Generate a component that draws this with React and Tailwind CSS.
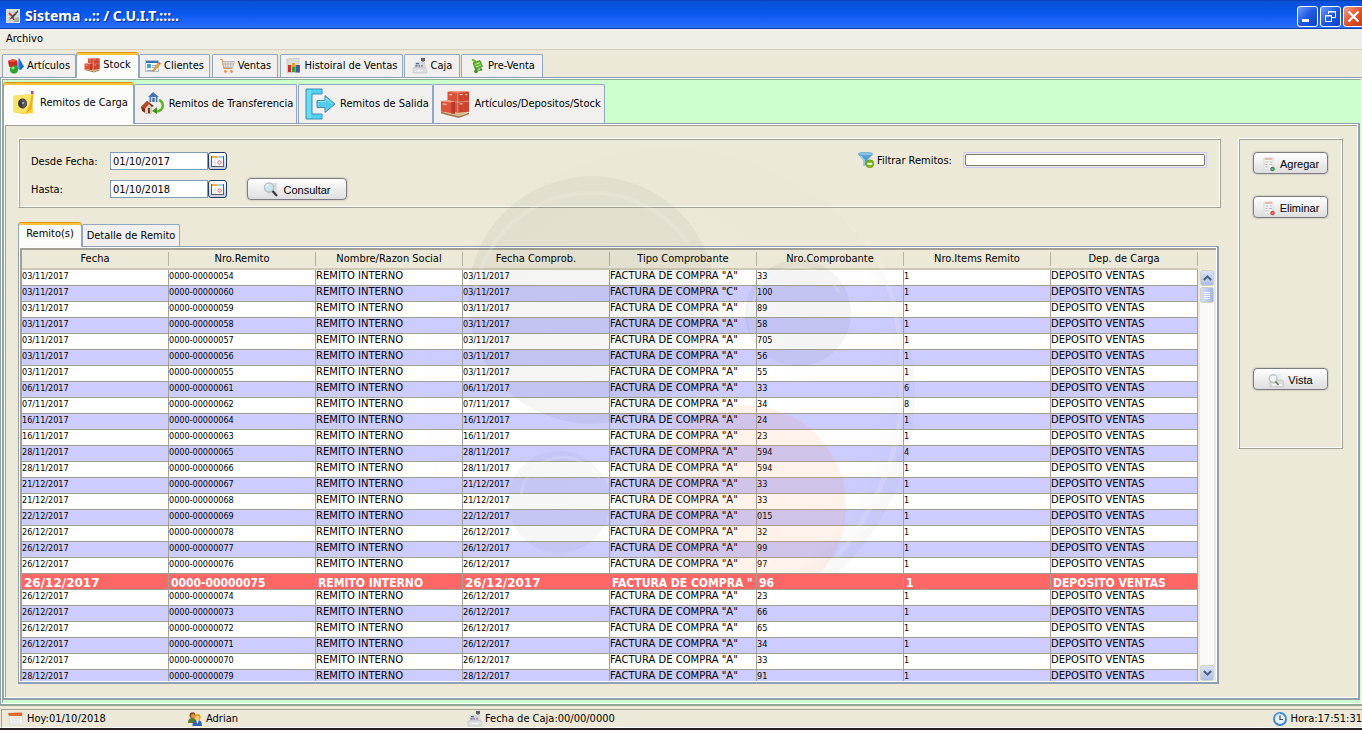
import React from "react";

const headers = [
  "Fecha",
  "Nro.Remito",
  "Nombre/Razon Social",
  "Fecha Comprob.",
  "Tipo Comprobante",
  "Nro.Comprobante",
  "Nro.Items Remito",
  "Dep. de Carga",
];

const rows = [
  ["03/11/2017", "54", '"A"', "33", "1"],
  ["03/11/2017", "60", '"C"', "100", "1"],
  ["03/11/2017", "59", '"A"', "89", "1"],
  ["03/11/2017", "58", '"A"', "58", "1"],
  ["03/11/2017", "57", '"A"', "705", "1"],
  ["03/11/2017", "56", '"A"', "56", "1"],
  ["03/11/2017", "55", '"A"', "55", "1"],
  ["06/11/2017", "61", '"A"', "33", "6"],
  ["07/11/2017", "62", '"A"', "34", "8"],
  ["16/11/2017", "64", '"A"', "24", "1"],
  ["16/11/2017", "63", '"A"', "23", "1"],
  ["28/11/2017", "65", '"A"', "594", "4"],
  ["28/11/2017", "66", '"A"', "594", "1"],
  ["21/12/2017", "67", '"A"', "33", "1"],
  ["21/12/2017", "68", '"A"', "33", "1"],
  ["22/12/2017", "69", '"A"', "015", "1"],
  ["26/12/2017", "78", '"A"', "32", "1"],
  ["26/12/2017", "77", '"A"', "99", "1"],
  ["26/12/2017", "76", '"A"', "97", "1"],
  ["26/12/2017", "75", '"', "96", "1"],
  ["26/12/2017", "74", '"A"', "23", "1"],
  ["26/12/2017", "73", '"A"', "66", "1"],
  ["26/12/2017", "72", '"A"', "65", "1"],
  ["26/12/2017", "71", '"A"', "34", "1"],
  ["26/12/2017", "70", '"A"', "33", "1"],
  ["28/12/2017", "79", '"A"', "91", "1"],
];

const SELECTED = "75";

/* ---------- icons ---------- */

const AppIcon = () => (
  <svg width="14" height="14" viewBox="0 0 14 14" aria-hidden="true">
    <rect width="14" height="14" fill="#e2e2df" />
    <path d="M1 3h12M1 6h12M1 9h12M1 12h8M4 0v14M8 0v14" stroke="#c4c8c4" />
    <path d="M3 4l3 3 2 4" stroke="#c22" strokeWidth="1.600" fill="none" />
    <path d="M12 1L7 6l-4 5 4-2 5-6z" fill="#4a4a4a" />
    <path d="M9 9l4-1v5H8z" fill="#a3b09a" />
  </svg>
);

const ShapesIcon = () => (
  <svg width="16" height="16" viewBox="0 0 16 16" aria-hidden="true">
    <path d="M0 3l5-2 4 1.500v6.500l-4 1.500-4-2z" fill="#d0241c" />
    <path d="M0 3l5-2 4 1.500-4 2z" fill="#ee5a45" />
    <path d="M11 0l5 8.500-3 3.500-5-2z" fill="#1c6fc0" />
    <path d="M11 0L8 10l3.500 1z" fill="#58a9ea" />
    <circle cx="6" cy="11.500" r="4" fill="#2ba32b" />
    <circle cx="5" cy="10" r="1.600" fill="#8fe07f" />
  </svg>
);

const BoxesIcon = ({ size }) => (
  <svg width={size} height={size} viewBox="0 0 32 32" aria-hidden="true">
    <path d="M1 23l15-3 15 4-11 5z" fill="#d8b98a" />
    <path d="M1 24l19 5 11-4v2l-11 4L1 26z" fill="#a67c4a" />
    <path d="M8 3l10-1 13 1v21l-13 1-10-2z" fill="#d6523a" />
    <path d="M19 3h12v21l-12 1z" fill="#c9432e" />
    <path d="M8 3l10-1 13 1-12 1z" fill="#f29a84" />
    <path d="M8 13l11 1 12-1M19 4v21" stroke="#f0a08e" strokeWidth=".9" fill="none" />
    <path d="M25 3v21" stroke="#d05a44" strokeWidth=".6" />
    <path d="M1 13l9-1 6 1.500v13L1 24z" fill="#dd533c" />
    <path d="M1 13l9-1 6 1.500-4 1z" fill="#f7a791" />
    <path d="M12 14.500l4-1v13l-4-.5z" fill="#b83a27" />
    <path d="M21 6l3-.2M27 6l2-.2M21 16l3-.2M3 16l4 .4M10 6l3 .2" stroke="#fbd0c4" strokeWidth="1.200" />
  </svg>
);

const ClientIcon = () => (
  <svg width="16" height="16" viewBox="0 0 16 16" aria-hidden="true">
    <rect x=".5" y="2.500" width="13" height="11" fill="#f6f9fc" stroke="#b3c3d4" />
    <path d="M1 3h12v2H1z" fill="#2d75b6" />
    <rect x="2" y="6" width="4" height="4" fill="#49a3c9" />
    <path d="M7 7.500h5M7 9.500h4M2 12.500h8" stroke="#9aaabb" />
    <path d="M8 12l5-7 2 1.500-5 6-2.500 1z" fill="#f0a326" stroke="#c8862a" strokeWidth=".5" />
    <path d="M13 5l1-1 2 1.500-1 1z" fill="#d9534a" />
  </svg>
);

const CartIcon = () => (
  <svg width="16" height="16" viewBox="0 0 16 16" aria-hidden="true">
    <path d="M1 1.500h2l2 9h8.500" fill="none" stroke="#d39a5c" strokeWidth="1.200" />
    <path d="M3.500 3.500h12l-2 6H5z" fill="#e6e2de" stroke="#b3aba4" strokeWidth=".8" />
    <path d="M6 4l1 5M9 4v5M12 4l-.5 5M4 6h11" stroke="#b3aba4" strokeWidth=".7" />
    <circle cx="6.500" cy="13.500" r="1.400" fill="#e5925a" />
    <circle cx="12.500" cy="13.500" r="1.400" fill="#e5925a" />
  </svg>
);

const ChartIcon = () => (
  <svg width="16" height="16" viewBox="0 0 16 16" aria-hidden="true">
    <path d="M1 1l12-1v14l-12 1z" fill="#dcdcdc" stroke="#bdbdbd" strokeWidth=".6" />
    <path d="M2 7h3v7H2z" fill="#cf2a2a" />
    <path d="M6 5h3v9H6z" fill="#e2a71c" />
    <path d="M6 9h3v5H6z" fill="#3a9a3a" />
    <path d="M9.500 7h3.500v7.500H9.500z" fill="#2b62ae" />
    <path d="M12.500 7H14v7.500h-1.500z" fill="#9a4550" />
  </svg>
);

const RegisterIcon = () => (
  <svg width="16" height="16" viewBox="0 0 16 16" aria-hidden="true">
    <rect x="9" y="0" width="4" height="3" fill="#5b6167" />
    <path d="M10 3h2v2h-2z" fill="#9a9fa4" />
    <path d="M3 4h10l1 6H2z" fill="#d3d6da" />
    <path d="M4 5h3v1.200H4zM3.500 7.200h2v1.200h-2zM6.500 7.200h1.500v1.200H6.500z" fill="#4a6585" />
    <path d="M9 7.200h2v1.200H9z" fill="#b86b6b" />
    <path d="M1 10h13l1 5H1z" fill="#dfe1e4" stroke="#bbbec2" strokeWidth=".6" />
    <path d="M5 12.500h6" stroke="#f8f8f8" />
  </svg>
);

const GreenCartIcon = () => (
  <svg width="16" height="16" viewBox="0 0 16 16" aria-hidden="true">
    <path d="M3 1.500l3 1 1 9 4 1" fill="none" stroke="#4d8f28" strokeWidth="1.200" />
    <path d="M4 5l7-2.500 2.500 6-7 3z" fill="#62b52e" stroke="#3c8a17" strokeWidth=".8" />
    <path d="M6 6.500l5-2M7 9l5-2" stroke="#c4ec9e" />
    <path d="M3 2l3 1.500" stroke="#79c540" strokeWidth="1.800" />
    <circle cx="7" cy="13.500" r="1.800" fill="#3c8a17" />
    <circle cx="12" cy="11.500" r="1.300" fill="#3c8a17" />
  </svg>
);

const NoteIcon = () => (
  <svg width="24" height="24" viewBox="0 0 24 24" aria-hidden="true">
    <path d="M1 5l19-2 1 19-10 1-10-2z" fill="#f6d12f" />
    <path d="M1 5l19-2-1 12-6 7-12-1z" fill="#fbe466" />
    <ellipse cx="10.500" cy="12.500" rx="4.500" ry="5" fill="#3b3b3b" />
    <path d="M10 8l4 1 1 5-4 4z" fill="#5a5a5a" />
    <circle cx="11" cy="12" r="1.200" fill="#a5a5a5" />
    <path d="M20 3l1.500 1-2 14-6 5 4-9z" fill="#f0ae1e" />
    <path d="M19 0h2.500v3L19 3z" fill="#b8468f" />
  </svg>
);

const TransferIcon = () => (
  <svg width="24" height="24" viewBox="0 0 24 24" aria-hidden="true">
    <path d="M12 0l6 5h-1.500v5H8.500V5H7z" fill="#4678b0" />
    <path d="M10 5h5v5h-5z" fill="#c6d9ec" />
    <path d="M11.500 6h2v4h-2z" fill="#3a5f8d" />
    <path d="M0 15l6-6 7 5-2 1v6l-5 1-5-3z" fill="#7b2c17" />
    <path d="M0 15l6-6 3 2-5 6z" fill="#b44b2a" />
    <path d="M4 16.500L8 12l3 3v6l-5 1-2-1z" fill="#d9c9bd" />
    <path d="M7 16h2v5H7z" fill="#70402b" />
    <path d="M18 8c5 2 5 9 0 11l-3 .5" fill="none" stroke="#5eb52a" strokeWidth="2.600" />
    <path d="M11 19l5-4v7z" fill="#3f951a" />
  </svg>
);

const ExitIcon = () => (
  <svg width="31" height="32" viewBox="0 0 31 32" aria-hidden="true">
    <path d="M1 1h16v5H7v20h10v5H1z" fill="#4fd3f2" stroke="#3a93b2" />
    <path d="M2 2h4v28H2z" fill="#6adcf5" />
    <path d="M12 12.500h8V7.500l10 8.500-10 8.500v-5h-8z" fill="#52cdec" stroke="#4a8aa5" />
    <path d="M13 13.500h8V10l6 6" fill="none" stroke="#8ce6f8" />
  </svg>
);

const DateIcon = () => (
  <svg width="13" height="11" viewBox="0 0 13 11" aria-hidden="true">
    <rect x=".5" y=".5" width="12" height="10" fill="#fff" stroke="#5e5e5e" />
    <path d="M1 0h5v2H1z" fill="#f1b13c" />
    <path d="M6 0h6v2H6z" fill="#a9c9ee" />
    <path d="M4 3v7M1 6h4" stroke="#d7d7d7" />
    <circle cx="8.500" cy="6.500" r="1.700" fill="none" stroke="#e0606a" />
  </svg>
);

const SearchIcon = () => (
  <svg width="16" height="16" viewBox="0 0 16 16" aria-hidden="true">
    <path d="M4 1h10v13H4z" fill="#dddfe0" />
    <path d="M6 4h7M6 7h7M6 10h7" stroke="#cccfd1" />
    <circle cx="6" cy="5.500" r="4.600" fill="#c8e6ee" stroke="#b3bcc1" strokeWidth="1.200" />
    <path d="M3 5a3 3 0 013-2.500" stroke="#fff" strokeWidth="1.200" fill="none" />
    <path d="M9.500 9l4.500 5" stroke="#3b3b3b" strokeWidth="2.200" />
  </svg>
);

const FunnelIcon = () => (
  <svg width="16" height="16" viewBox="0 0 16 16" aria-hidden="true">
    <path d="M0 2l5.500 6.500V14L9 13V8.500L15 2z" fill="#549fd0" />
    <path d="M2 3.500l4 4.500v5" stroke="#9fd0ee" strokeWidth="1.500" fill="none" />
    <ellipse cx="7.500" cy="2" rx="7.300" ry="1.700" fill="#8cc4e6" stroke="#4f97c6" strokeWidth=".6" />
    <circle cx="11.800" cy="11.800" r="4" fill="#7db61c" stroke="#558709" strokeWidth=".5" />
    <path d="M9.500 11.800h4.600" stroke="#fff" strokeWidth="1.800" />
  </svg>
);

const DocIcon = ({ color }) => (
  <svg width="14" height="15" viewBox="0 0 14 15" aria-hidden="true">
    <path d="M2 1h9v12H2z" fill="#f3f3f2" stroke="#dadada" />
    <path d="M3 2h7" stroke="#f2a890" strokeWidth="1.500" />
    <path d="M3.500 5h3M8 5h2M3.500 7.500h2M7 7.500h3M3.500 10h3" stroke="#b9b9b9" />
    <circle cx="10.500" cy="12" r="2.300" fill={color} />
    <path d="M9.500 12h2" stroke="#fff" strokeOpacity=".6" />
  </svg>
);

const PreviewIcon = () => (
  <svg width="16" height="15" viewBox="0 0 16 15" aria-hidden="true">
    <path d="M6 1h7v6H6z" fill="#e3edf4" />
    <path d="M2 7h12l2 2v5H2z" fill="#dddcd9" stroke="#c3c2bf" strokeWidth=".7" />
    <path d="M4 12h10" stroke="#f8f8f8" strokeWidth="1.500" />
    <circle cx="5" cy="5.500" r="3.800" fill="#eef3f5" stroke="#bdbdbb" strokeWidth="1.200" />
    <path d="M7.500 8.500l3 3.500" stroke="#777" strokeWidth="1.800" />
  </svg>
);

const CalendarIcon = () => (
  <svg width="15" height="14" viewBox="0 0 15 14" aria-hidden="true">
    <path d="M1 2h13l1 11H2z" fill="#f5f5f3" stroke="#cfcdc6" strokeWidth=".6" />
    <path d="M0 1l14-.5V4H1z" fill="#de6a2c" />
    <path d="M3 6h9M3 8.500h9M3 11h10M5 5v8M8 5v8M11 5v8" stroke="#e0e0e0" strokeWidth=".7" />
  </svg>
);

const UsersIcon = () => (
  <svg width="14" height="14" viewBox="0 0 14 14" aria-hidden="true">
    <path d="M0 11c0-4 2-5 4.500-5S9 8 9 11z" fill="#5f7d25" />
    <circle cx="4.500" cy="3.300" r="3" fill="#8a4f18" />
    <circle cx="5" cy="4" r="2" fill="#d89450" />
    <path d="M4.500 14c0-5 2-6 4.800-6S14 9.500 14 14z" fill="#2f66b3" />
    <path d="M8 8h3l-1.500 4z" fill="#e8eefa" />
    <circle cx="9.500" cy="5.200" r="3.100" fill="#e0961d" />
    <circle cx="9.300" cy="6" r="2.200" fill="#f6c876" />
  </svg>
);

const ClockIcon = () => (
  <svg width="14" height="14" viewBox="0 0 14 14" aria-hidden="true">
    <circle cx="7" cy="7" r="6" fill="#e9f3fd" stroke="#3b86dd" strokeWidth="1.900" />
    <path d="M2 5a5.500 5.500 0 015-3.500" fill="none" stroke="#a9d0fa" />
    <path d="M7 3.500V7.500h3" fill="none" stroke="#3c4a5c" strokeWidth="1.200" />
  </svg>
);

/* ---------- widgets ---------- */

function Tab({ label, icon, selected, width, size = "sm" }) {
  const spacing = size === "lg" ? "gap-1 pl-[3px]" : "gap-[3px]";
  return (
    <button
      type="button"
      role="tab"
      aria-selected={!!selected}
      className={`relative flex shrink-0 items-center justify-center whitespace-nowrap border-x border-t ${spacing} ${width} ${
        selected
          ? "z-10 -mb-px self-stretch rounded-t-[3px] border-x-[#91a7c0] border-t-[#e0940c] bg-[#fcfcfb] pb-[2px] shadow-[inset_0_2px_0_#fdc23c]"
          : "mt-[2px] rounded-t-[2px] border-[#91a7c0] bg-[#f1f0ee]"
      }`}
    >
      {icon}
      <span>{label}</span>
    </button>
  );
}

function DateField({ id, label, value }) {
  return (
    <div className="flex h-[18px] items-center">
      <label htmlFor={id} className="w-[79px] pt-[2px]">
        {label}
      </label>
      <input
        id={id}
        defaultValue={value}
        className="h-[18px] w-[98px] border border-[#7f9db9] bg-white px-[2px] outline-none"
      />
      <button
        type="button"
        aria-label={`Elegir ${label}`}
        className="flex h-[18px] w-[19px] items-center justify-center rounded-[3px] border border-[#1c3c6e] bg-linear-to-b from-white to-[#c9cdda]"
      >
        <DateIcon />
      </button>
    </div>
  );
}

function PushButton({ icon, label, className }) {
  return (
    <button
      type="button"
      className={`flex h-[22px] items-center justify-center gap-1 rounded-[4px] border border-[#7c7c80] bg-linear-to-b from-white to-[#dedee0] pt-[2px] font-['Liberation_Sans',sans-serif] text-[11px] shadow-[0_0_2px_#9a9a94] ${className}`}
    >
      {icon}
      <span>{label}</span>
    </button>
  );
}

const etched =
  "border border-t-white border-l-white border-r-[#a3a195] border-b-[#a3a195] shadow-[inset_1px_1px_0_#a3a195,inset_-1px_-1px_0_#ffffff]";

const NUMBER_CELL = "text-[9px] leading-[13px]";
const TEXT_CELL = "font-['DejaVu_Sans',sans-serif] text-[10px] leading-[12px]";

function RemitosTable() {
  return (
    <table className="w-full table-fixed border-separate border-spacing-0">
      <thead>
        <tr>
          {headers.map((h) => (
            <th
              key={h}
              scope="col"
              className="h-5 border-b-2 border-[#cdc9b4] bg-[#ece9d8] p-0 font-normal"
            >
              <div className="h-[14px] border-r border-[#b5b2a2] leading-[14px] shadow-[1px_0_0_#ffffff]">
                {h}
              </div>
            </th>
          ))}
        </tr>
      </thead>
      <tbody>
        {rows.map(([date, nro, letter, comp, items], i) => {
          const selected = nro === SELECTED;
          const cells = [
            [date, NUMBER_CELL, "font-['DejaVu_Sans',sans-serif]"],
            [`0000-000000${nro}`, NUMBER_CELL, ""],
            ["REMITO INTERNO", TEXT_CELL, ""],
            [date, NUMBER_CELL, "font-['DejaVu_Sans',sans-serif]"],
            [`FACTURA DE COMPRA ${letter}`, TEXT_CELL, ""],
            [comp, NUMBER_CELL, ""],
            [items, NUMBER_CELL, ""],
            ["DEPOSITO VENTAS", TEXT_CELL, ""],
          ];
          const tone = selected
            ? "bg-[#ff6666] font-bold text-white"
            : i % 2
              ? "bg-[#ccccff]"
              : "bg-white";
          return (
            <tr key={nro} className={tone}>
              {cells.map(([text, plain, strong], k) => (
                <td key={k} className="h-4 border-r border-b border-[#a3a195] p-0">
                  <div
                    className={`h-[15px] overflow-hidden whitespace-nowrap ${
                      selected ? `pl-[2px] text-[12px] leading-[18px] ${strong}` : plain
                    }`}
                  >
                    {text}
                  </div>
                </td>
              ))}
            </tr>
          );
        })}
      </tbody>
    </table>
  );
}

function Scrollbar() {
  const btn =
    "flex h-4 shrink-0 items-center justify-center rounded-[2px] border border-[#d6d3c4] bg-linear-to-b from-[#d9e4fb] to-[#aebde4]";
  return (
    <div className="flex w-[18px] shrink-0 flex-col bg-[#ece9d8] pt-5 pr-px pl-px">
      <div className="flex min-h-0 flex-1 flex-col border-x border-[#e8e6da] bg-[#f9f9f7]">
        <button type="button" aria-label="Subir" className={btn}>
          <svg width="9" height="6" viewBox="0 0 9 6">
            <path d="M.8 5L4.500 1.500 8.200 5" fill="none" stroke="#4d6185" strokeWidth="2" />
          </svg>
        </button>
        <div className="mt-px flex h-4 flex-col items-center justify-center gap-px rounded-[2px] border border-[#d6d3c4] bg-linear-to-r from-[#d3dffb] to-[#a5b6df]">
          <i className="h-px w-[6px] bg-white" />
          <i className="h-px w-[6px] bg-white" />
          <i className="h-px w-[6px] bg-white" />
          <i className="h-px w-[6px] bg-white" />
        </div>
        <div className="flex-1" />
        <button type="button" aria-label="Bajar" className={btn}>
          <svg width="9" height="6" viewBox="0 0 9 6">
            <path d="M.8 1L4.500 4.500 8.200 1" fill="none" stroke="#4d6185" strokeWidth="2" />
          </svg>
        </button>
      </div>
    </div>
  );
}

const Watermark = () => (
  <svg
    className="pointer-events-none absolute top-[14px] left-[414px] z-20"
    width="506"
    height="433"
    viewBox="420 139 506 433"
    aria-hidden="true"
  >
    <defs>
      <radialGradient id="ring" cx=".44" cy=".46" r=".56">
        <stop offset="0" stopColor="#808070" stopOpacity="0" />
        <stop offset=".9" stopColor="#808070" stopOpacity=".01" />
        <stop offset="1" stopColor="#606060" stopOpacity=".045" />
      </radialGradient>
    </defs>
    <circle cx="669" cy="393" r="246" fill="url(#ring)" />
    <path
      d="M880 262c26 60 32 150 4 215c-14 36-34 64-56 90"
      fill="none"
      stroke="#fff"
      strokeOpacity=".14"
      strokeWidth="5"
    />
    <circle cx="592" cy="299" r="124" fill="#404030" fillOpacity=".055" />
    <path d="M475 290a118 118 0 01213-48" fill="none" stroke="#fff" strokeOpacity=".15" strokeWidth="4" />
    <circle cx="798" cy="312" r="53" fill="#404040" fillOpacity=".05" />
    <path d="M714 326l33-10 4 16-40 12z" fill="#404040" fillOpacity=".03" />
    <path d="M753 302a46 46 0 0186-10" fill="none" stroke="#fff" strokeOpacity=".15" strokeWidth="3" />
    <circle cx="559" cy="501" r="51" fill="#404040" fillOpacity=".045" />
    <path d="M521 495a42 42 0 0178-18" fill="none" stroke="#fff" strokeOpacity=".15" strokeWidth="3" />
    <path d="M657 401l18 28 12-8z" fill="#ff7a20" fillOpacity=".07" />
    <circle cx="745" cy="505" r="101" fill="#ff7a20" fillOpacity=".09" />
  </svg>
);

export default function App() {
  return (
    <div className="flex h-screen flex-col overflow-hidden bg-[#ece9d8] font-['DejaVu_Sans_Condensed','DejaVu_Sans',sans-serif] text-[11px] leading-[14px] text-black">
      <header className="flex h-[29px] shrink-0 items-center border-t border-b border-t-[#0a44b4] border-b-[#0a3fb5] bg-linear-to-b from-[#0a50d8] via-[#0958f0] to-[#2a70ff] pt-[3px] pl-[6px] text-white">
        <AppIcon />
        <h1 className="flex-1 pl-[5px] font-['Noto_Sans',sans-serif] text-[14px] leading-4 font-bold [text-shadow:1px_1px_1px_#0a2a80]">
          Sistema ..:: / C.U.I.T.:::..
        </h1>
        <div className="-mr-[2px] flex shrink-0 gap-[2px]">
          <button
            type="button"
            aria-label="Minimizar"
            className="flex h-[21px] w-[21px] items-center justify-center rounded-[3px] border border-white bg-linear-to-br from-[#6b9bf8] via-[#1f59e0] to-[#0c42c4]"
          >
            <svg width="15" height="15" viewBox="0 0 15 15">
              <path d="M2 10h7v3H2z" fill="#fff" />
            </svg>
          </button>
          <button
            type="button"
            aria-label="Restaurar"
            className="flex h-[21px] w-[21px] items-center justify-center rounded-[3px] border border-white bg-linear-to-br from-[#6b9bf8] via-[#1f59e0] to-[#0c42c4]"
          >
            <svg width="15" height="15" viewBox="0 0 15 15">
              <path d="M5.500 5V2.500h7v6H9M5 3h8" fill="none" stroke="#fff" />
              <path d="M2.500 6.500h6v6h-6zM2 7h7" fill="none" stroke="#fff" />
            </svg>
          </button>
          <button
            type="button"
            aria-label="Cerrar"
            className="flex h-[21px] w-[21px] items-center justify-center rounded-[3px] border border-white bg-linear-to-br from-[#f0a08a] via-[#e0552c] to-[#c23a12]"
          >
            <svg width="15" height="15" viewBox="0 0 15 15">
              <path d="M2.500 2.500l10 10M12.500 2.500l-10 10" stroke="#fff" strokeWidth="2.200" />
            </svg>
          </button>
        </div>
      </header>

      <nav className="flex h-[21px] shrink-0 items-center border-b border-[#d4d0bc] bg-[#efeee7] pl-[6px]">
        <button type="button">Archivo</button>
      </nav>

      <div role="tablist" className="flex h-[27px] shrink-0 pt-[2px] pl-[2px]">
        <Tab label="Artículos" icon={<ShapesIcon />} width="w-[74px]" />
        <Tab label="Stock" icon={<BoxesIcon size={16} />} width="w-[63px]" selected />
        <Tab label="Clientes" icon={<ClientIcon />} width="w-[71px]" />
        <div className="w-[2px]" />
        <Tab label="Ventas" icon={<CartIcon />} width="w-[66px]" />
        <div className="w-[2px]" />
        <Tab label="Histoiral de Ventas" icon={<ChartIcon />} width="w-[123px]" />
        <div className="w-px" />
        <Tab label="Caja" icon={<RegisterIcon />} width="w-[56px]" />
        <div className="w-px" />
        <Tab label="Pre-Venta" icon={<GreenCartIcon />} width="w-[82px]" />
      </div>

      <main className="flex min-h-0 flex-1 flex-col border-t border-b-2 border-l border-t-[#919fb3] border-b-[#8fa796] border-l-[#919fb3]">
        <div className="flex min-h-0 flex-1 flex-col border border-white">
          <div className="flex min-h-0 flex-1 flex-col border-t border-l border-[#93ab93] bg-[#ccffcc] pr-px pb-[3px]">
            <div role="tablist" className="flex h-[43px] shrink-0 pt-[2px]">
              <Tab label="Remitos de Carga" icon={<NoteIcon />} width="w-[131px]" size="lg" selected />
              <Tab label="Remitos de Transferencia" icon={<TransferIcon />} width="w-[163px]" size="lg" />
              <div className="w-px" />
              <Tab label="Remitos de Salida" icon={<ExitIcon />} width="w-[135px]" size="lg" />
              <Tab
                label="Artículos/Depositos/Stock"
                icon={<BoxesIcon size={30} />}
                width="w-[172px]"
                size="lg"
              />
            </div>

            <div className="flex min-h-0 flex-1 border-t border-r-2 border-b-2 border-l border-[#919fb3]">
              <div className="flex min-h-0 flex-1 border border-white">
                <div className="relative flex min-h-0 min-w-0 flex-1 gap-[17px] border-t border-l border-[#a3a195] bg-[#ece9d8] pt-3 pr-[14px] pb-[13px] pl-3">
                  <Watermark />

                  <div className="flex min-h-0 min-w-0 flex-1 flex-col">
                    <section className={`flex h-[70px] shrink-0 items-start px-3 pt-[13px] ${etched}`}>
                      <div className="flex flex-col gap-[10px]">
                        <DateField id="desde" label="Desde Fecha:" value="01/10/2017" />
                        <DateField id="hasta" label="Hasta:" value="01/10/2018" />
                      </div>
                      <PushButton
                        icon={<SearchIcon />}
                        label="Consultar"
                        className="mt-[26px] ml-5 w-[100px]"
                      />
                      <div className="ml-auto flex items-center pr-px">
                        <FunnelIcon />
                        <label htmlFor="filtro" className="w-[89px] pt-[2px] pl-[3px]">
                          Filtrar Remitos:
                        </label>
                        <div className="border border-[#ccccff] p-px">
                          <input
                            id="filtro"
                            className="block h-[12px] w-[240px] rounded-[2px] border border-[#7a7a78] bg-white px-1 outline-none"
                          />
                        </div>
                      </div>
                    </section>

                    <div role="tablist" className="mt-[14px] flex h-[24px] shrink-0">
                      <Tab label="Remito(s)" width="w-[64px]" selected />
                      <Tab label="Detalle de Remito" width="w-[98px]" />
                    </div>
                    <div className="mr-[2px] flex min-h-0 flex-1 border-t border-r-2 border-b-2 border-l border-[#919fb3]">
                      <div className="flex min-h-0 min-w-0 flex-1 border border-white">
                        <div className="flex min-h-0 min-w-0 flex-1 overflow-hidden border-t-2 border-l-2 border-[#a3a195] bg-[#ece9d8]">
                          <div className="min-w-0 flex-1">
                            <RemitosTable />
                          </div>
                          <Scrollbar />
                        </div>
                      </div>
                    </div>
                  </div>

                  <aside className={`flex h-[311px] w-[105px] shrink-0 flex-col items-center pt-[13px] ${etched}`}>
                    <PushButton icon={<DocIcon color="#3a8a4a" />} label="Agregar" className="w-[75px]" />
                    <PushButton
                      icon={<DocIcon color="#d0404a" />}
                      label="Eliminar"
                      className="mt-[22px] w-[75px]"
                    />
                    <PushButton icon={<PreviewIcon />} label="Vista" className="mt-[150px] w-[75px]" />
                  </aside>
                </div>
              </div>
            </div>
          </div>
        </div>
      </main>

      <footer className="shrink-0 border-b-2 border-[#26211e] pt-[3px] pl-px">
        <div className="flex h-[19px] items-center border-t border-b border-l border-t-[#a3a195] border-b-white border-l-[#a3a195] pl-[6px]">
          <div className="flex w-[180px] items-center gap-1">
            <CalendarIcon />
            <span>Hoy:01/10/2018</span>
          </div>
          <div className="flex w-[279px] items-center gap-1">
            <UsersIcon />
            <span>Adrian</span>
          </div>
          <div className="flex flex-1 items-center gap-[2px]">
            <RegisterIcon />
            <span>Fecha de Caja:00/00/0000</span>
          </div>
          <div className="flex shrink-0 items-center gap-1">
            <ClockIcon />
            <span>Hora:17:51:31</span>
          </div>
        </div>
      </footer>
    </div>
  );
}
